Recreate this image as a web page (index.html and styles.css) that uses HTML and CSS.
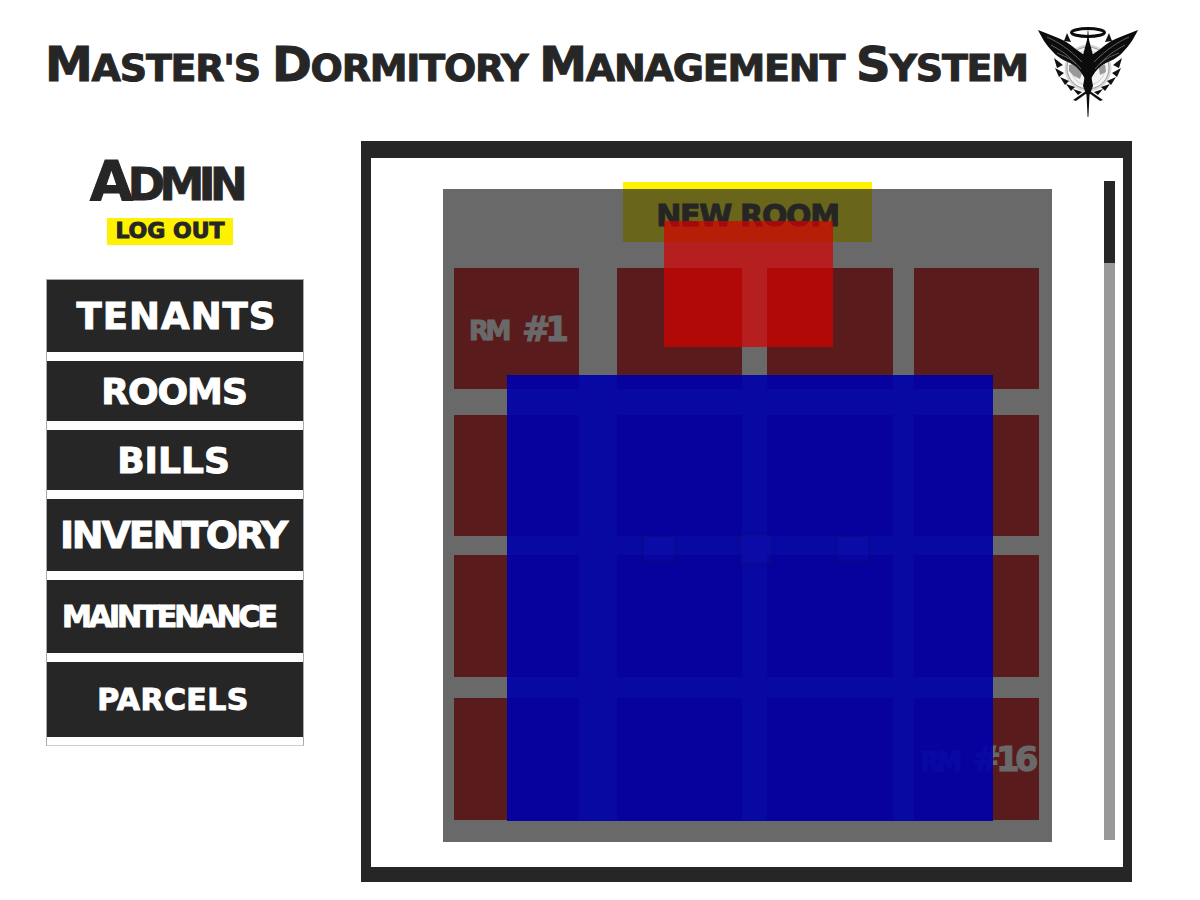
FILE: index.html
```html
<!DOCTYPE html>
<html lang="en">
<head>
    <meta charset="UTF-8">
    <meta name="viewport" content="width=device-width, initial-scale=1.0">
    <title>Master's Dormitory Management System</title>
    <link rel="stylesheet" href="styles.css">
</head>
<body>
    <header class="top-bar">
        <h1 class="page-title"><span class="big-cap">M</span>aster's <span class="big-cap">D</span>ormitory <span class="big-cap">M</span>anagement <span class="big-cap">S</span>ystem</h1>
        <svg class="emblem" viewBox="0 0 100 90" aria-label="Emblem">
            <defs>
                <g id="half">
                    <path d="M33 15L29 6L26 14ZM27 21L20 17L21 25ZM25 38L16 31L19 41ZM26 46L17 41L21 50ZM31 54L22 50L27 58ZM37 60L28 57L33 64ZM44 65L35 62L40 68ZM35 73L48 64L49 66L38 74Z" fill="#111"/>
                    <path d="M0 3C12 8 24 11 34 19C40 24 45 27 49 30L50 60C47 50 43 44 37 39C30 34 22 33 15 25C8 18 4 11 0 3Z" fill="#0c0c0c"/>
                    <path d="M9 10C20 15 31 22 44 35M13 18C22 23 31 28 43 42M19 26C26 29 32 31 38 37" stroke="#8a8a8a" stroke-width="0.7" fill="none"/>
                    <path d="M50 0L51 13L55 28L53 48L55 59L51.5 68L50.4 90L50 90Z" fill="#0c0c0c"/>
                </g>
            </defs>
            <circle cx="50" cy="41" r="23.5" fill="#d8d8d8"/>
            <circle cx="50" cy="41" r="21" fill="#f4f4f4" stroke="#888" stroke-width="0.8"/>
            <circle cx="50" cy="41" r="17" fill="none" stroke="#c4c4c4" stroke-width="0.8"/>
            <path d="M31 38l9-2 5 7-3 9-6-3-5-5zM60 36l7 2 1 7-6 3z" fill="#999"/>
            <ellipse cx="50" cy="5.5" rx="16.5" ry="4" fill="none" stroke="#0c0c0c" stroke-width="3"/>
            <use href="#half"/>
            <use href="#half" transform="matrix(-1 0 0 1 100 0)"/>
        </svg>
    </header>

    <main class="content">
        <aside class="sidebar">
            <div class="admin-box">
                <div class="admin-name"><span class="admin-cap">A</span>dmin</div>
                <a class="logout-btn" href="#">Log Out</a>
            </div>
            <nav class="side-nav">
                <a class="nav-item nav-tenants" href="#">Tenants</a>
                <a class="nav-item nav-rooms" href="#">Rooms</a>
                <a class="nav-item nav-bills" href="#">Bills</a>
                <a class="nav-item nav-inventory" href="#">Inventory</a>
                <a class="nav-item nav-maintenance" href="#">Maintenance</a>
                <a class="nav-item nav-parcels" href="#">Parcels</a>
            </nav>
        </aside>

        <section class="frame">
            <div class="room-panel">
                <button class="new-room-btn">New Room</button>
                <div class="room-grid">
                    <div class="room"><span class="rm">RM</span><span class="rm-num">#1</span></div>
                    <div class="room"></div>
                    <div class="room"></div>
                    <div class="room"></div>
                    <div class="room"></div>
                    <div class="room"></div>
                    <div class="room"></div>
                    <div class="room"></div>
                    <div class="room"></div>
                    <div class="room"></div>
                    <div class="room"></div>
                    <div class="room"></div>
                    <div class="room"></div>
                    <div class="room"></div>
                    <div class="room"></div>
                    <div class="room"><span class="rm">RM</span><span class="rm-num">#16</span></div>
                </div>
                <div class="dim-layer"></div>
                <div class="red-popup"></div>
                <div class="blue-popup">
                    <span class="dot"></span>
                    <span class="dot dot-mid"></span>
                    <span class="dot"></span>
                </div>
            </div>
            <div class="scroll-track"><div class="scroll-thumb"></div></div>
        </section>
    </main>
</body>
</html>
```

FILE: styles.css
```css
* {
    box-sizing: border-box;
}
body {
    margin: 0;
    background-color: #fff;
    color: #262626;
    font-family: 'DejaVu Sans', sans-serif;
    font-weight: bold;
    text-transform: uppercase;
    -webkit-text-stroke: 1px currentColor;
}
a {
    text-decoration: none;
}

.top-bar {
    display: flex;
    align-items: flex-start;
    height: 141px;
    padding: 27px 0 0 45px;
}
.page-title {
    width: 993px;
    margin: 15px 0 0;
    font-size: 38px;
    line-height: 44px;
    letter-spacing: -1.22px;
    white-space: nowrap;
}
.big-cap {
    font-size: 48px;
}
.emblem {
    width: 100px;
    height: 90px;
}

.content {
    display: flex;
    align-items: flex-start;
    padding-left: 46px;
}

.sidebar {
    width: 258px;
    margin-right: 57px;
}
.admin-box {
    display: flex;
    flex-direction: column;
    align-items: center;
    height: 138px;
    padding-top: 14px;
}
.admin-name {
    margin-right: 18px;
    font-size: 45px;
    line-height: 52px;
    letter-spacing: -5.5px;
}
.admin-cap {
    font-size: 56px;
}
.logout-btn {
    display: block;
    width: 126px;
    height: 27px;
    margin-top: 7px;
    margin-right: 10px;
    background-color: #fff200;
    color: #262626;
    font-size: 22px;
    line-height: 25px;
    text-align: center;
    white-space: nowrap;
}

.side-nav {
    display: flex;
    flex-direction: column;
    gap: 9px;
    padding-bottom: 8px;
    border: 1px solid #aaa;
    border-bottom-color: #ccc;
}
.nav-item {
    display: flex;
    align-items: center;
    justify-content: center;
    background-color: #262626;
    color: #fff;
    white-space: nowrap;
}
.nav-tenants {
    height: 72px;
    padding-left: 3px;
    font-size: 37px;
    letter-spacing: 1px;
}
.nav-rooms {
    height: 60px;
    padding-right: 2px;
    font-size: 36px;
    letter-spacing: -1px;
}
.nav-bills {
    height: 60px;
    padding-right: 3px;
    font-size: 36px;
}
.nav-inventory {
    height: 72px;
    padding-right: 4px;
    font-size: 38px;
    letter-spacing: -2.2px;
}
.nav-maintenance {
    height: 73px;
    padding-right: 13px;
    font-size: 30px;
    letter-spacing: -3px;
}
.nav-parcels {
    height: 75px;
    padding-right: 4px;
    font-size: 30px;
    letter-spacing: 0.4px;
}

.frame {
    display: flex;
    align-items: flex-start;
    width: 771px;
    height: 741px;
    padding: 23px 0 0 72px;
    border-style: solid;
    border-color: #262626;
    border-width: 17px 9px 15px 10px;
}

.room-panel {
    position: relative;
    width: 609px;
    height: 653px;
    margin-top: 8px;
}
.new-room-btn {
    display: block;
    width: 249px;
    height: 60px;
    margin: -7px auto 0;
    padding: 7px 0 0;
    border: none;
    background-color: #fff200;
    color: #262626;
    font-family: inherit;
    font-weight: bold;
    font-size: 30px;
    letter-spacing: -1.3px;
    text-transform: uppercase;
    white-space: nowrap;
}
.room-grid {
    display: grid;
    grid-template-columns: 163px 150px 147px 125px;
    grid-template-rows: 147px 140px 143px 122px;
    margin: 26px 0 0 11px;
}
.room {
    display: flex;
    align-items: center;
    justify-content: center;
    gap: 14px;
    width: 125px;
    height: 121px;
    background-color: #cc0505;
    color: #fff;
}
.room:nth-child(4n+3) {
    width: 126px;
}
.room:nth-child(n+9) {
    height: 122px;
}
.rm {
    padding-top: 5px;
    font-size: 26px;
    letter-spacing: -3.5px;
}
.rm-num {
    font-size: 34px;
    letter-spacing: -5px;
}

/* popups lie over the room list */
.dim-layer {
    position: absolute;
    inset: 0;
    background-color: rgba(38, 38, 38, 0.69);
}
.red-popup {
    position: absolute;
    left: 221px;
    top: 32px;
    width: 169px;
    height: 126px;
    background-color: rgba(215, 0, 0, 0.7);
}
.blue-popup {
    position: absolute;
    left: 64px;
    top: 186px;
    display: flex;
    justify-content: center;
    align-items: flex-start;
    gap: 61px;
    width: 486px;
    height: 446px;
    padding: 157px 0 0 12px;
    background-color: rgba(0, 0, 168, 0.92);
}
.dot {
    width: 36px;
    height: 30px;
    border: 3px solid rgba(0, 0, 60, 0.16);
    margin-top: 2px;
    background-color: rgba(60, 60, 255, 0.06);
}
.dot-mid {
    height: 34px;
    margin-top: 0;
}

.scroll-track {
    width: 11px;
    height: 659px;
    margin-left: 52px;
    background-color: #999;
}
.scroll-thumb {
    height: 82px;
    background-color: #262626;
}
```
